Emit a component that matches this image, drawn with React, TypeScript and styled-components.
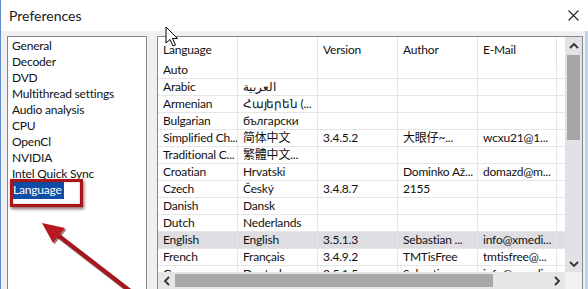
import styled, { createGlobalStyle } from "styled-components";

const GlobalStyle = createGlobalStyle`
  html, body {
    margin: 0;
    padding: 0;
    background: #f0f0f0;
  }
  body {
    font-family: Lato, "Noto Sans", "Noto Sans CJK SC", sans-serif;
  }
`;

const Window = styled.div`
  position: relative;
  width: 588px;
  height: 289px;
  overflow: hidden;
  background: #f0f0f0;
  border-left: 1px solid #5d8cc8;
  box-sizing: border-box;
  display: flex;
  flex-direction: column;
`;

const TitleBar = styled.div`
  height: 31px;
  flex: none;
  background: #fff;
  display: flex;
  align-items: center;
  justify-content: space-between;
  padding: 0 9px 0 8px;
  font-size: 14px;
  color: #1a1a1a;
`;

const CloseIcon = () => (
  <svg width="11" height="11" viewBox="0 0 11 11">
    <path d="M0.5 0.5 L10.5 10.5 M10.5 0.5 L0.5 10.5" stroke="#222" strokeWidth="1.1" />
  </svg>
);

const Body = styled.div`
  flex: 1;
  display: flex;
  gap: 10px;
  padding: 5px 5px 0 6px;
  min-height: 0;
`;

const SideList = styled.ul`
  width: 140px;
  box-sizing: border-box;
  margin: 0;
  padding: 1px 0 0 0;
  list-style: none;
  background: #fff;
  border: 1px solid #828790;
  border-bottom: none;
`;

const SideItem = styled.li`
  height: 16px;
  line-height: 16px;
  padding-left: 4px;
  font-size: 12px;
  letter-spacing: -0.2px;
  color: #111;
  white-space: nowrap;
`;

const Selected = styled.span`
  background: #0f4ea8;
  color: #fff;
  padding: 1px 2px 2px 1px;
`;

const TablePanel = styled.div`
  width: 426px;
  box-sizing: border-box;
  border: 1px solid #828790;
  border-bottom: none;
  background: #fff;
  display: grid;
  grid-template-columns: 407px 17px;
  grid-template-rows: 235px 17px;
`;

const TableArea = styled.div`
  overflow: hidden;
`;

const Row = styled.div<{ $head?: boolean; $hl?: boolean }>`
  display: grid;
  grid-template-columns: 80px 80px 80px 80px 79px 8px;
  height: ${(p) => (p.$head ? 25 : 17)}px;
  background: ${(p) => (p.$hl ? "#dedee2" : "transparent")};
`;

const Cell = styled.div<{ $head?: boolean }>`
  box-sizing: border-box;
  padding-left: 5px;
  font-size: 12px;
  letter-spacing: -0.2px;
  line-height: ${(p) => (p.$head ? 25 : 16)}px;
  color: #111;
  white-space: nowrap;
  overflow: hidden;
  border-right: 1px solid ${(p) => (p.$head ? "#e3e3e3" : "#e6e6e6")};
  border-bottom: ${(p) => (p.$head ? "none" : "1px solid #e6e6e6")};
  &:last-child {
    border-right: none;
  }
`;

const VScroll = styled.div`
  background: #e2e2e6;
  display: flex;
  flex-direction: column;
`;

const ArrowBox = styled.div<{ $h?: number }>`
  height: ${(p) => p.$h ?? 18}px;
  width: 17px;
  display: flex;
  align-items: center;
  justify-content: center;
  flex: none;
`;

const VThumb = styled.div`
  height: 85px;
  margin: 0 2px;
  background: #a6a6a6;
`;

const VTrack = styled.div`
  flex: 1;
`;

const HScroll = styled.div`
  background: #e6e6e8;
  display: flex;
  align-items: stretch;
`;

const HThumb = styled.div`
  width: 318px;
  margin: 2px 0;
  background: #a8a8a8;
`;

const Corner = styled.div`
  background: #f2f2f2;
`;

const Chevron = ({ dir }: { dir: "up" | "down" | "left" | "right" }) => {
  const pts = {
    up: "1,6 5,2 9,6",
    down: "1,2 5,6 9,2",
    left: "6,1 2,5 6,9",
    right: "2,1 6,5 2,9",
  }[dir];
  const wide = dir === "up" || dir === "down";
  return (
    <svg width={wide ? 10 : 8} height={wide ? 8 : 10} viewBox={wide ? "0 0 10 8" : "0 0 8 10"}>
      <polyline points={pts} fill="none" stroke="#333" strokeWidth="1.8" />
    </svg>
  );
};

const Overlay = styled.svg`
  position: absolute;
  left: 0;
  top: 0;
  pointer-events: none;
`;

const RedBox = styled.div`
  position: absolute;
  left: 9px;
  top: 179px;
  width: 73px;
  height: 28px;
  box-sizing: border-box;
  border: 3px solid #a8161c;
  box-shadow: 1px 2px 3px rgba(60, 0, 0, 0.6), inset 0 0 2px rgba(120, 0, 0, 0.4);
`;

const RightEdge = styled.div`
  position: absolute;
  right: 0;
  top: 31px;
  bottom: 0;
  width: 3px;
  background: #bcd2ec;
`;

const sideItems = [
  "General",
  "Decoder",
  "DVD",
  "Multithread settings",
  "Audio analysis",
  "CPU",
  "OpenCl",
  "NVIDIA",
  "Intel Quick Sync",
];

const rows: { c: string[]; hl?: boolean }[] = [
  { c: ["Auto", "", "", "", ""] },
  { c: ["Arabic", "العربية", "", "", ""] },
  { c: ["Armenian", "Հայերեն (...", "", "", ""] },
  { c: ["Bulgarian", "български", "", "", ""] },
  { c: ["Simplified Ch...", "简体中文", "3.4.5.2", "大眼仔~...", "wcxu21@1..."] },
  { c: ["Traditional C...", "繁體中文...", "", "", ""] },
  { c: ["Croatian", "Hrvatski", "", "Dominko Až...", "domazd@m..."] },
  { c: ["Czech", "Český", "3.4.8.7", "2155", ""] },
  { c: ["Danish", "Dansk", "", "", ""] },
  { c: ["Dutch", "Nederlands", "", "", ""] },
  { c: ["English", "English", "3.5.1.3", "Sebastian ...", "info@xmedi..."], hl: true },
  { c: ["French", "Français", "3.4.9.2", "TMTisFree", "tmtisfree@..."] },
  { c: ["German", "Deutsch", "3.5.1.5", "Sebastian ...", "info@xmedi..."] },
];

export default function App() {
  return (
    <>
      <GlobalStyle />
      <Window>
        <TitleBar>
          <span>Preferences</span>
          <CloseIcon />
        </TitleBar>
        <Body>
          <SideList>
            {sideItems.map((s) => (
              <SideItem key={s}>{s}</SideItem>
            ))}
            <SideItem>
              <Selected>Language</Selected>
            </SideItem>
          </SideList>
          <TablePanel>
            <TableArea>
              <Row $head>
                {["Language", "", "Version", "Author", "E-Mail", ""].map((h, i) => (
                  <Cell $head key={i}>
                    {h}
                  </Cell>
                ))}
              </Row>
              {rows.map((r, i) => (
                <Row key={i} $hl={r.hl}>
                  {r.c.map((t, j) => (
                    <Cell key={j}>{t}</Cell>
                  ))}
                  <Cell />
                </Row>
              ))}
            </TableArea>
            <VScroll>
              <ArrowBox>
                <Chevron dir="up" />
              </ArrowBox>
              <VThumb />
              <VTrack />
              <ArrowBox $h={17}>
                <Chevron dir="down" />
              </ArrowBox>
            </VScroll>
            <HScroll>
              <ArrowBox>
                <Chevron dir="left" />
              </ArrowBox>
              <HThumb />
              <VTrack />
              <ArrowBox>
                <Chevron dir="right" />
              </ArrowBox>
            </HScroll>
            <Corner />
          </TablePanel>
        </Body>
        <RightEdge />
        <RedBox />
        <Overlay width="588" height="289" viewBox="0 0 588 289">
          <line x1="133" y1="294" x2="54" y2="233" stroke="#3a0505" strokeOpacity="0.5" strokeWidth="5" transform="translate(1.5,1.5)" />
          <polygon points="41,223 64,228 52,243" fill="#3a0505" fillOpacity="0.5" transform="translate(1.5,1.5)" />
          <line x1="133" y1="294" x2="54" y2="233" stroke="#a8161c" strokeWidth="4" />
          <polygon points="41,223 64,228 52,243" fill="#b8181e" />
          <path
            d="M165 27 L165 43 L169 39.5 L172 46 L174.5 45 L171.5 38.5 L176.5 38.5 Z"
            fill="#fff"
            stroke="#000"
            strokeWidth="1"
            strokeLinejoin="round"
          />
        </Overlay>
      </Window>
    </>
  );
}
